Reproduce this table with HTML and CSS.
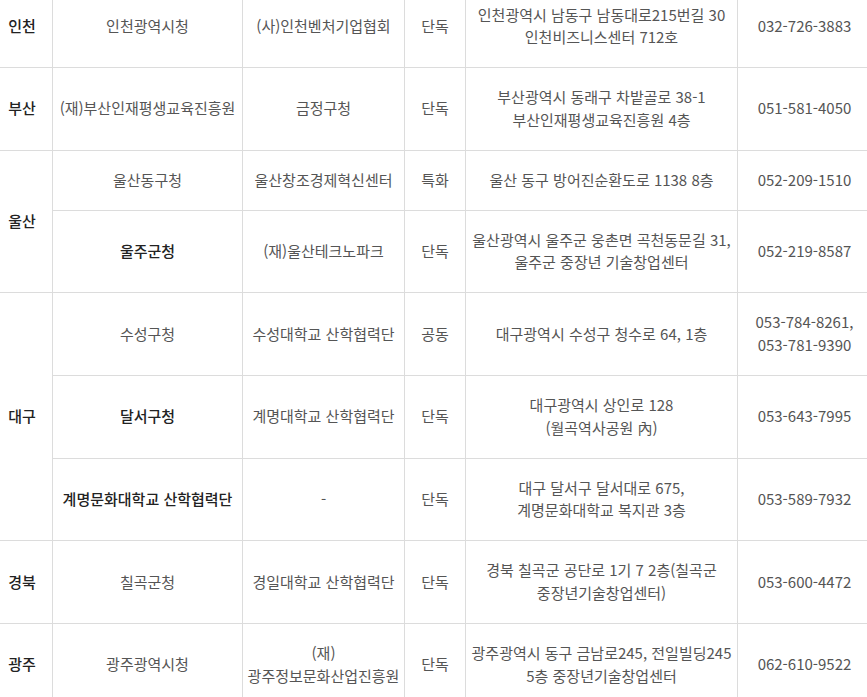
FILE: index.html
```html
<!DOCTYPE html>
<html lang="ko">
<head>
<meta charset="utf-8">
<title>창업센터 목록</title>
<link rel="stylesheet" href="styles.css">
</head>
<body>
<div class="wrap">
<table class="list">
<colgroup>
<col class="c-region">
<col class="c-org">
<col class="c-host">
<col class="c-type">
<col class="c-addr">
<col class="c-tel">
</colgroup>
<tbody>
<tr>
<td class="region">인천</td>
<td>인천광역시청</td>
<td>(사)인천벤처기업협회</td>
<td>단독</td>
<td>인천광역시 남동구 남동대로215번길 30<br>인천비즈니스센터 712호</td>
<td>032-726-3883</td>
</tr>
<tr>
<td class="region">부산</td>
<td>(재)부산인재평생교육진흥원</td>
<td>금정구청</td>
<td>단독</td>
<td>부산광역시 동래구 차밭골로 38-1<br>부산인재평생교육진흥원 4층</td>
<td>051-581-4050</td>
</tr>
<tr>
<td class="region" rowspan="2">울산</td>
<td>울산동구청</td>
<td>울산창조경제혁신센터</td>
<td>특화</td>
<td>울산 동구 방어진순환도로 1138 8층</td>
<td>052-209-1510</td>
</tr>
<tr>
<td class="strong">울주군청</td>
<td>(재)울산테크노파크</td>
<td>단독</td>
<td>울산광역시 울주군 웅촌면 곡천동문길 31,<br>울주군 중장년 기술창업센터</td>
<td>052-219-8587</td>
</tr>
<tr>
<td class="region" rowspan="3">대구</td>
<td>수성구청</td>
<td>수성대학교 산학협력단</td>
<td>공동</td>
<td>대구광역시 수성구 청수로 64, 1층</td>
<td>053-784-8261,<br>053-781-9390</td>
</tr>
<tr>
<td class="strong">달서구청</td>
<td>계명대학교 산학협력단</td>
<td>단독</td>
<td>대구광역시 상인로 128<br>(월곡역사공원 內)</td>
<td>053-643-7995</td>
</tr>
<tr>
<td class="strong">계명문화대학교 산학협력단</td>
<td>-</td>
<td>단독</td>
<td>대구 달서구 달서대로 675,<br>계명문화대학교 복지관 3층</td>
<td>053-589-7932</td>
</tr>
<tr>
<td class="region">경북</td>
<td>칠곡군청</td>
<td>경일대학교 산학협력단</td>
<td>단독</td>
<td>경북 칠곡군 공단로 1기 7 2층(칠곡군<br>중장년기술창업센터)</td>
<td>053-600-4472</td>
</tr>
<tr>
<td class="region">광주</td>
<td>광주광역시청</td>
<td>(재)<br>광주정보문화산업진흥원</td>
<td>단독</td>
<td>광주광역시 동구 금남로245, 전일빌딩245<br>5층 중장년기술창업센터</td>
<td>062-610-9522</td>
</tr>
</tbody>
</table>
</div>
</body>
</html>
```
FILE: styles.css
```css
html, body {
  margin: 0;
  padding: 0;
  background: #fff;
}
body {
  overflow: hidden;
  font-family: "Noto Sans CJK KR", "Noto Sans", sans-serif;
}
.wrap {
  margin: -15.67px 0 0 -9px;
  width: 880px;
}
.list {
  width: 880px;
  border-collapse: collapse;
  table-layout: fixed;
}
.c-region { width: 61px; }
.c-org { width: 190px; }
.c-host { width: 162px; }
.c-type { width: 61px; }
.c-addr { width: 272px; }
.c-tel { width: 134px; }
.list td {
  border: 1px solid #dcdcdc;
  padding: 18.17px 2px;
  text-align: center;
  vertical-align: middle;
  font-size: 15px;
  line-height: 22.67px;
  color: #555;
}
.list td.region,
.list td.strong {
  color: #222;
  font-weight: 500;
}
```
